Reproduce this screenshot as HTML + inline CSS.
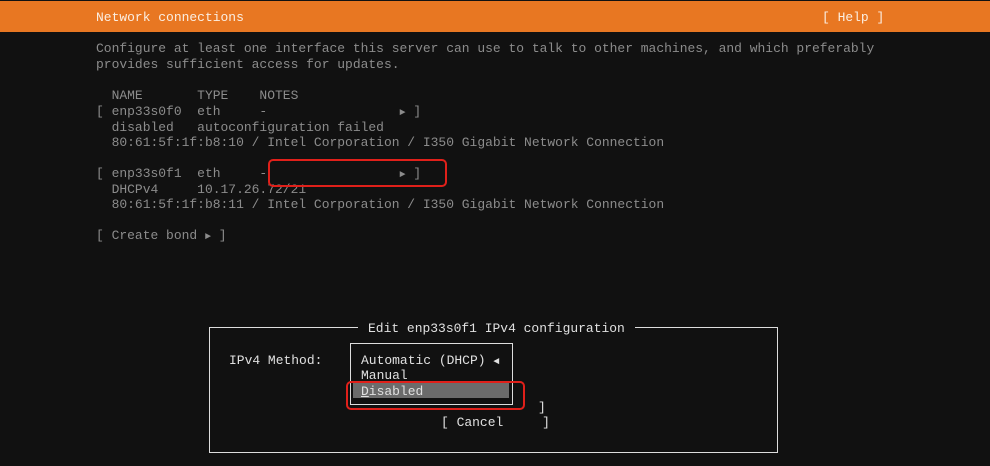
<!DOCTYPE html>
<html><head><meta charset="utf-8"><style>
html,body{margin:0;padding:0}
body{width:990px;height:466px;background:#111;position:relative;overflow:hidden;font-family:"Liberation Mono",monospace;font-size:12.97px;}
.t{position:absolute;white-space:pre;line-height:16px;color:#8c8c8c}
.w{color:#e0e0e0}
.a{font-size:10px}
#bar{position:absolute;left:0;top:1px;width:990px;height:31px;background:#e87722}
.red{position:absolute;border:2px solid #e0201a;border-radius:5px}
</style></head><body>
<div id="bar"></div>
<div class="t" style="left:96px;top:10px;color:#fbeee2">Network connections</div>
<div class="t" style="left:822px;top:10px;color:#fbeee2">[ Help ]</div>
<div class="t" style="left:96px;top:41px">Configure at least one interface this server can use to talk to other machines, and which preferably</div>
<div class="t" style="left:96px;top:57px">provides sufficient access for updates.</div>
<div class="t" style="left:96px;top:88px">  NAME       TYPE    NOTES</div>
<div class="t" style="left:96px;top:104px">[ enp33s0f0  eth     -                 <span class="a">►</span> ]</div>
<div class="t" style="left:96px;top:120px">  disabled   autoconfiguration failed</div>
<div class="t" style="left:96px;top:135px">  80:61:5f:1f:b8:10 / Intel Corporation / I350 Gigabit Network Connection</div>
<div class="t" style="left:96px;top:166px">[ enp33s0f1  eth     -                 <span class="a">►</span> ]</div>
<div class="t" style="left:96px;top:182px">  DHCPv4     10.17.26.72/21</div>
<div class="t" style="left:96px;top:197px">  80:61:5f:1f:b8:11 / Intel Corporation / I350 Gigabit Network Connection</div>
<div class="t" style="left:96px;top:228px">[ Create bond <span class="a">►</span> ]</div>
<div class="red" style="left:268px;top:159px;width:175px;height:24px"></div>

<div style="position:absolute;left:209px;top:327px;width:567px;height:124px;border:1px solid #ddd"></div>
<div class="t w" style="left:358px;top:321px;background:#111;padding:0 10px">Edit enp33s0f1 IPv4 configuration</div>
<div class="t w" style="left:229px;top:353px">IPv4 Method:</div>
<div style="position:absolute;left:350px;top:343px;width:161px;height:60px;border:1px solid #ddd"></div>
<div style="position:absolute;left:353px;top:383px;width:156px;height:15px;background:#6b6b6b"></div>
<div class="t w" style="left:361px;top:353px">Automatic (DHCP) <span class="a">◄</span></div>
<div class="t w" style="left:361px;top:368px">Manual</div>
<div class="t w" style="left:361px;top:384px"><u>D</u>isabled</div>
<div class="red" style="left:346px;top:381px;width:175px;height:25px"></div>
<div class="t w" style="left:538px;top:400px">]</div>
<div class="t w" style="left:441px;top:415px">[ Cancel     ]</div>
</body></html>
